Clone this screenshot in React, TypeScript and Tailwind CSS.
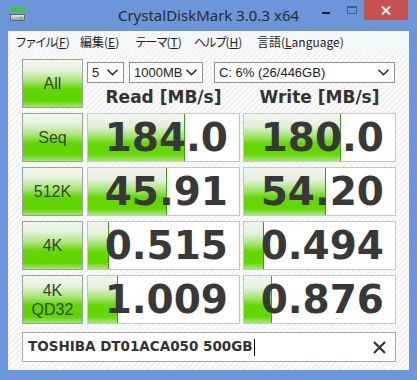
import React from "react";

const rows = [
  { label: ["Seq"], r: "184.0", w: "180.0", rb: 97, wb: 97 },
  { label: ["512K"], r: "45.91", w: "54.20", rb: 79, wb: 82 },
  { label: ["4K"], r: "0.515", w: "0.494", rb: 21, wb: 20 },
  { label: ["4K", "QD32"], r: "1.009", w: "0.876", rb: 30, wb: 28 },
];

function GreenButton({ lines }: { lines: string[] }) {
  return (
    <div className="w-[61px] h-[49px] shrink-0 border border-[#9ba39a] bg-[linear-gradient(to_bottom,#f4f8f1_0%,#e3f2d9_22%,#a6e574_45%,#62d600_62%,#5fd400_86%,#9fe86e_100%)] flex flex-col items-center justify-center text-[#36452c] text-[16px] leading-[19px] font-['Liberation_Sans',sans-serif]">
      {lines.map((l) => (
        <span key={l}>{l}</span>
      ))}
    </div>
  );
}

function ValueBox({ value, bar }: { value: string; bar: number }) {
  return (
    <div className="relative w-[153px] h-[49px] shrink-0 border border-[#c6c6c6] bg-white flex items-center justify-end pr-[11px]">
      <div
        className="absolute left-0 top-0 bottom-0 border-r border-[#3f9a1c] bg-[linear-gradient(to_bottom,#f2f5f0_0%,#e2f1d8_26%,#a4e472_47%,#63d802_63%,#62d700_86%,#a5e977_100%)]"
        style={{ width: bar }}
      />
      <span className="relative font-['DejaVu_Sans',sans-serif] font-bold text-[39px] leading-none text-[#383838]">
        {value}
      </span>
    </div>
  );
}

function Chevron() {
  return (
    <svg width="11" height="7" viewBox="0 0 11 7" className="shrink-0">
      <polyline points="0.5,0.8 5.5,5.8 10.5,0.8" fill="none" stroke="#222" strokeWidth="1.4" />
    </svg>
  );
}

function Select({ text, w, className = "" }: { text: string; w: string; className?: string }) {
  return (
    <div className={`${w} h-[21px] border border-[#8f8f8f] bg-white flex items-center justify-between pl-[4px] pr-[5px] text-[13px] text-[#222] font-['Liberation_Sans',sans-serif] ${className}`}>
      <span>{text}</span>
      <Chevron />
    </div>
  );
}

export default function App() {
  return (
    <div className="w-[417px] h-[380px] bg-[#6b96da] flex flex-col overflow-hidden">
      {/* Title bar */}
      <div className="relative h-[31px] shrink-0 flex items-start justify-center">
        <div className="absolute left-[10px] top-[7px] flex flex-col gap-[2px]">
          <div className="w-[15px] h-[5px] rounded-[1px] bg-[#3fc43f]" />
          <div className="w-[15px] h-[7px] rounded-[1px] bg-[linear-gradient(to_bottom,#e8e8e8,#9a9a9a)] border border-[#666] relative">
            <div className="absolute right-[2px] top-[2px] w-[2px] h-[2px] bg-[#2fd02f]" />
          </div>
        </div>
        <span className="mt-[5px] text-[15px] leading-[20px] text-[#2b2b2b] font-['Noto_Sans',sans-serif]">
          CrystalDiskMark 3.0.3 x64
        </span>
        <div className="absolute right-[9px] top-0 flex items-start">
          <div className="w-[26px] h-[20px] flex items-center justify-center">
            <div className="w-[8px] h-[2px] bg-[#222] mt-[6px]" />
          </div>
          <div className="w-[25px] h-[20px] flex items-center justify-center">
            <div className="w-[10px] h-[8px] border border-[#3d5f95] border-t-2" />
          </div>
          <div className="w-[44px] h-[20px] bg-[#c75050] flex items-center justify-center">
            <svg width="10" height="9" viewBox="0 0 10 9">
              <path d="M1 0.5 L9 8.5 M9 0.5 L1 8.5" stroke="white" strokeWidth="2" />
            </svg>
          </div>
        </div>
      </div>

      {/* Client */}
      <div className="flex-1 mx-[8px] mb-[10px] flex flex-col bg-white">
        <div className="h-[21px] shrink-0 bg-[#f5f6f7] flex items-center pl-[7px] text-[12px] text-[#1e1e1e] font-['Noto_Sans_CJK_JP',sans-serif] leading-none whitespace-nowrap">
          <span className="w-[65px] shrink-0"><span className="tracking-[-2px]">ファイル</span>(<span className="underline">F</span>)</span>
          <span className="w-[55px] shrink-0">編集(<span className="underline">E</span>)</span>
          <span className="w-[59px] shrink-0"><span className="tracking-[-1.5px]">テーマ</span>(<span className="underline">T</span>)</span>
          <span className="w-[63px] shrink-0"><span className="tracking-[-1.5px]">ヘルプ</span>(<span className="underline">H</span>)</span>
          <span className="shrink-0">言語(<span className="underline">L</span>anguage)</span>
        </div>

        <div className="flex-1 pl-[14px] pt-[7px] flex flex-col gap-[5px] bg-[repeating-linear-gradient(135deg,#fcfcfc_0px,#fcfcfc_2px,#f2f2f2_2px,#f2f2f2_4px)]">
          {/* Top row */}
          <div className="flex h-[49px]">
            <GreenButton lines={["All"]} />
            <div className="ml-[4px] flex flex-col">
              <div className="flex mt-[3px]">
                <Select text="5" w="w-[37px]" />
                <Select text="1000MB" w="w-[74px]" className="ml-[5px]" />
                <Select text="C: 6% (26/446GB)" w="w-[181px]" className="ml-[11px]" />
              </div>
              <div className="flex mt-[4px] font-['DejaVu_Sans',sans-serif] font-bold text-[17px] leading-[20px] text-[#333]">
                <span className="w-[153px] text-center">Read [MB/s]</span>
                <span className="w-[153px] ml-[3px] text-center">Write [MB/s]</span>
              </div>
            </div>
          </div>

          {rows.map((row) => (
            <div key={row.r} className="flex">
              <GreenButton lines={row.label} />
              <div className="ml-[4px]">
                <ValueBox value={row.r} bar={row.rb} />
              </div>
              <div className="ml-[3px]">
                <ValueBox value={row.w} bar={row.wb} />
              </div>
            </div>
          ))}

          <div className="mt-[3px] w-[374px] h-[30px] border border-[#a9a9a9] bg-white flex items-center pl-[5px] pr-[9px]">
            <span className="font-['DejaVu_Sans',sans-serif] font-bold text-[13.5px] text-[#333] leading-none">
              TOSHIBA DT01ACA050 500GB
            </span>
            <div className="w-[1px] h-[17px] bg-black ml-[1px]" />
            <div className="flex-1" />
            <svg width="13" height="13" viewBox="0 0 13 13">
              <path d="M1 1 L12 12 M12 1 L1 12" stroke="#333" strokeWidth="2.2" />
            </svg>
          </div>
        </div>
      </div>
    </div>
  );
}
